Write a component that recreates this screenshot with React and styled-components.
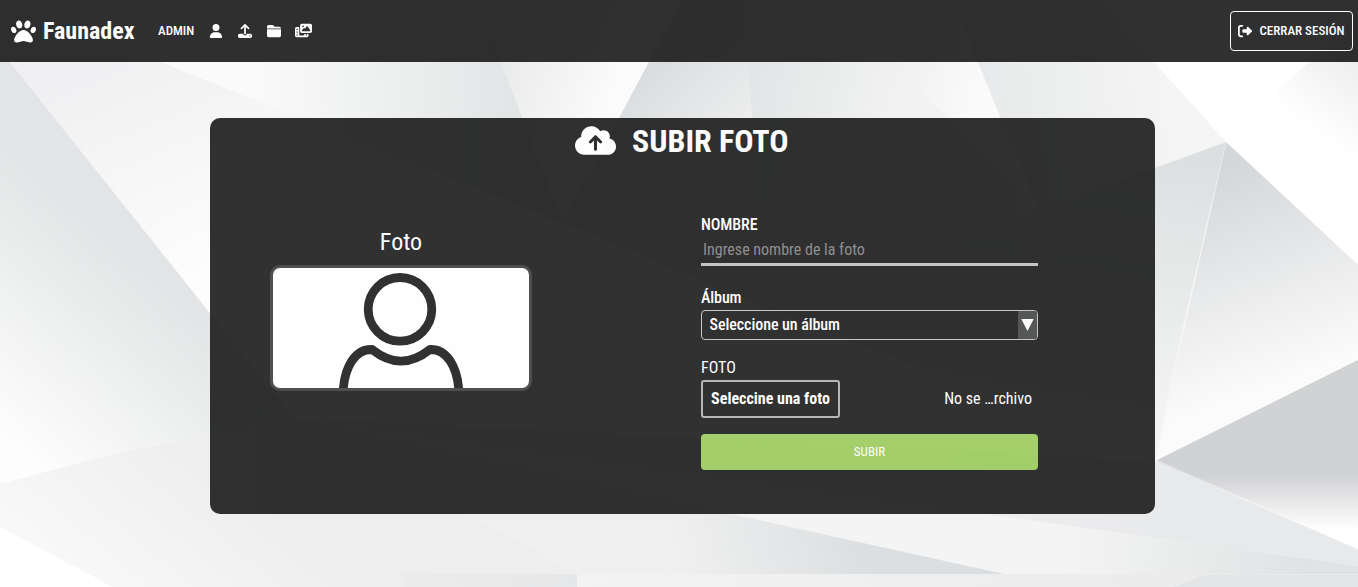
import React from 'react';
import styled, { createGlobalStyle } from 'styled-components';
import {
  FaPaw, FaUser, FaUpload, FaFolderClosed, FaPhotoFilm, FaRightFromBracket, FaCloudArrowUp,
} from 'react-icons/fa6';

const GlobalStyle = createGlobalStyle`
  * { box-sizing: border-box; }
  html, body, #root { height: 100%; }
  body {
    margin: 0;
    overflow: hidden;
    color: #fff;
    background: #fff;
    font-family: 'Roboto Condensed', Roboto, sans-serif;
    font-stretch: 75%;
    font-size: 16px;
  }
  button, input { font: inherit; font-stretch: inherit; color: inherit; }
`;

const Page = styled.div`
  position: relative;
  display: flex;
  flex-direction: column;
  align-items: center;
  height: 100%;
  isolation: isolate;
`;

const Backdrop = styled.svg`
  position: absolute;
  inset: 0;
  z-index: -1;
`;

const Header = styled.header`
  display: flex;
  align-items: center;
  width: 100%;
  height: 62px;
  padding: 0 5px 1px 10px;
  background: #1b1a1a;
  opacity: 0.9;
`;

const Brand = styled.div`
  display: flex;
  align-items: center;
  gap: 7.5px;
  width: 148px;
  padding: 1px 0 0 0.5px;
  font-size: 24px;
  font-weight: 700;
  line-height: 29px;
`;

const NavLabel = styled.span`
  width: 51px;
  font-size: 13px;
  font-weight: 500;
`;

const NavIcons = styled.nav`
  display: flex;
  align-items: center;
  gap: 14.8px;
  flex: 1;
  font-size: 14px;
`;

const LogoutButton = styled.button`
  display: flex;
  align-items: center;
  justify-content: center;
  gap: 7px;
  width: 123px;
  height: 40px;
  margin-top: 1px;
  padding: 0 0 1px;
  background: none;
  border: 1px solid #fff;
  border-radius: 4px;
  font-size: 13px;
  font-weight: 500;
`;

const Panel = styled.main`
  width: 945px;
  height: 396px;
  margin: 56px 0 0 7px;
  background: #1b1b1b;
  border-radius: 10px;
  opacity: 0.9;
`;

const Title = styled.h1`
  display: flex;
  align-items: center;
  justify-content: center;
  gap: 15.5px;
  height: 44px;
  margin: 0;
  padding-right: 1px;
  font-size: 32px;
  font-weight: 700;
`;

const TitleText = styled.span`
  padding-top: 2px;
`;

const Columns = styled.div`
  display: flex;
  justify-content: space-between;
  padding: 0 117px 0 60px;
`;

const Preview = styled.section`
  width: 262px;
  padding-top: 64px;
  text-align: center;
`;

const PreviewTitle = styled.h2`
  margin: 0 0 7px;
  font-size: 24px;
  line-height: 32px;
  font-weight: 400;
`;

const PreviewFrame = styled.div`
  height: 126px;
  overflow: hidden;
  background: #fff;
  border: 3px solid #3d3d3d;
  border-radius: 10px;
`;

const Form = styled.form`
  display: flex;
  flex-direction: column;
  width: 337px;
  padding-top: 53px;
`;

const Label = styled.label`
  height: 20px;
  line-height: 20px;
  margin-bottom: 3px;
  font-weight: ${(p) => (p.$light ? 400 : 500)};
  letter-spacing: ${(p) => (p.$light ? 0 : '-0.1px')};
`;

const TextInput = styled.input`
  height: 28px;
  margin-bottom: 22px;
  padding: 0 2px 2px;
  background: none;
  border: 0;
  border-bottom: 3px solid #c0c0c0;
  outline: 0;
  &::placeholder { color: #858585; opacity: 1; }
`;

const Select = styled.div`
  display: flex;
  justify-content: space-between;
  height: 30px;
  margin: -1px 0 18px;
  border: 1px solid #c0c0c0;
  border-radius: 4px;
  overflow: hidden;
  line-height: 27px;
  padding-left: 7.5px;
  font-weight: 500;
  letter-spacing: -0.06px;
`;

const SelectArrow = styled.span`
  display: flex;
  align-items: center;
  justify-content: center;
  width: 19px;
  background: #454746;
`;

const FileRow = styled.div`
  display: flex;
  align-items: center;
  justify-content: space-between;
  height: 38px;
  margin: -1px 0 16px;
  padding-right: 6px;
`;

const FileButton = styled.button`
  width: 139px;
  height: 38px;
  padding: 0 0 2px;
  background: none;
  border: 2px solid #b0b0b0;
  border-radius: 3px;
  font-weight: 700;
`;

const FileName = styled.span`
  padding-bottom: 2px;
`;

const SubmitButton = styled.button`
  height: 36px;
  padding: 0 0 1px;
  background: #9bcb5b;
  border: 0;
  border-radius: 4px;
  font-size: 13px;
`;

/* Each facet: polygon points, gradient vector and its two end colours. */
const facets = [
  ['0,0 0,587 1358,587 1358,0', [0, 0, 0, 587], '#f1f1f2', '#f4f4f4'],
  ['0,50 10,62 293,418 240,587 0,587', [190, 300, 40, 470], '#e2e4e5', '#fdfdfd'],
  ['0,0 40,40 160,62 1155,461 1155,470 294,418 10,62', [100, 62, 200, 300], '#f0f0f2', '#fefefe'],
  ['5,0 160,62 563,223 501,62 477,0', [250, 90, 540, 80], '#fafafa', '#e0e3e4'],
  ['477,0 501,62 563,223 649,62 682,0', [500, 60, 610, 100], '#e9eaea', '#fbfbfb'],
  ['682,0 649,62 563,223 770,309 747,62 741,0', [660, 60, 750, 150], '#dadddf', '#f1f1f1'],
  ['741,0 747,62 770,309 1038,210 891,62 830,0', [750, 70, 900, 110], '#e2e5e6', '#f2f2f2'],
  ['830,0 891,62 1038,210 978,62 953,0', [890, 62, 980, 80], '#eeefef', '#fafafa'],
  ['953,0 978,62 1038,210 1226,142 1154,62 1098,0', [980, 110, 1170, 80], '#e7e9ea', '#f5f5f5'],
  ['1098,0 1154,62 1226,142 1358,265 1358,0', [1250, 150, 1358, 0], '#ffffff', '#ffffff'],
  ['1370,0 1309,62 1255,112 1358,190', [1358, 62, 1310, 130], '#eeeeee', '#ffffff'],
  ['770,309 1226,142 1155,445 1155,461', [1200, 155, 1150, 440], '#dcdfe0', '#f5f5f5'],
  ['1226,142 1358,265 1358,360 1155,461', [1215, 170, 1290, 380], '#d4d6d8', '#fbfbfb'],
  ['1155,461 1358,360 1358,549', [0, 476, 0, 530], '#d1d2d4', '#ffffff'],
  ['294,418 1155,461 1358,549 1358,566', [700, 500, 1200, 470], '#f2f2f2', '#e8e9eb'],
  ['294,418 1358,566 1358,587 1050,587 1004,574', [1300, 590, 1060, 545], '#e0e3e4', '#f4f4f4'],
  ['0,484 110,455 293,418 470,514 577,574 577,587 0,587', [200, 455, 80, 600], '#eeeeee', '#f9f9f9'],
  ['0,527 113,587 0,587', [0, 527, 0, 587], '#ffffff', '#ffffff'],
  ['294,418 1004,574 577,574 470,514', [860, 543, 680, 590], '#dcdfe1', '#f0f0f0'],
  ['400,574 577,574 577,587 405,587', [400, 574, 577, 574], '#ececed', '#e6e7e8'],
  ['577,574 1358,574 1358,587 577,587', [577, 0, 1200, 0], '#f3f3f4', '#ebebec'],
  ['1204,575 1358,575 1358,587 1174,587', [1174, 0, 1358, 0], '#e2e4e5', '#e2e4e5'],
];

function PolygonBackdrop() {
  return (
    <Backdrop viewBox="0 0 1358 587" width="100%" height="100%" preserveAspectRatio="xMidYMid slice" aria-hidden="true">
      <defs>
        {facets.map(([, [x1, y1, x2, y2], from, to], i) => (
          <linearGradient key={i} id={`facet${i}`} gradientUnits="userSpaceOnUse" x1={x1} y1={y1} x2={x2} y2={y2}>
            <stop offset="0" stopColor={from} />
            <stop offset="1" stopColor={to} />
          </linearGradient>
        ))}
      </defs>
      {facets.map(([points], i) => <polygon key={i} points={points} fill={`url(#facet${i})`} />)}
      <path d="M1358 359L1155 460L1358 549" fill="none" stroke="#fff" strokeWidth="1.5" opacity="0.4" />
      <path d="M1226 143L1155 455" fill="none" stroke="#fff" strokeWidth="1.5" opacity="0.2" />
    </Backdrop>
  );
}

function Avatar() {
  return (
    <svg width="256" height="120" viewBox="0 0 256 120" fill="none" stroke="#1b1b1b" strokeWidth="8.8" aria-label="Foto">
      <circle cx="127" cy="41.3" r="31.8" />
      <path d="M70.3 121 C72 99 82 81 99 81.5 Q114 93.2 128 93.2 Q142 93.2 157 81.5 C174 81 184 99 185.7 121" strokeLinejoin="round" />
    </svg>
  );
}

export default function App() {
  return (
    <>
      <GlobalStyle />
      <Page>
        <PolygonBackdrop />
        <Header>
          <Brand><FaPaw size={25} />Faunadex</Brand>
          <NavLabel>ADMIN</NavLabel>
          <NavIcons>
            <FaUser size={14} />
            <FaUpload size={14} />
            <FaFolderClosed size={14} />
            <FaPhotoFilm size={17} />
          </NavIcons>
          <LogoutButton type="button"><FaRightFromBracket size={14} />CERRAR SESIÓN</LogoutButton>
        </Header>
        <Panel>
          <Title><FaCloudArrowUp size={41} /><TitleText>SUBIR FOTO</TitleText></Title>
          <Columns>
            <Preview>
              <PreviewTitle>Foto</PreviewTitle>
              <PreviewFrame><Avatar /></PreviewFrame>
            </Preview>
            <Form>
              <Label htmlFor="nombre">NOMBRE</Label>
              <TextInput id="nombre" placeholder="Ingrese nombre de la foto" />
              <Label>Álbum</Label>
              <Select>
                Seleccione un álbum
                <SelectArrow>
                  <svg width="13" height="12" viewBox="0 0 13 12" fill="#fff"><path d="M.3 0h12.4L6.5 12z" /></svg>
                </SelectArrow>
              </Select>
              <Label $light>FOTO</Label>
              <FileRow>
                <FileButton type="button">Seleccine una foto</FileButton>
                <FileName>No se …rchivo</FileName>
              </FileRow>
              <SubmitButton type="button">SUBIR</SubmitButton>
            </Form>
          </Columns>
        </Panel>
      </Page>
    </>
  );
}
